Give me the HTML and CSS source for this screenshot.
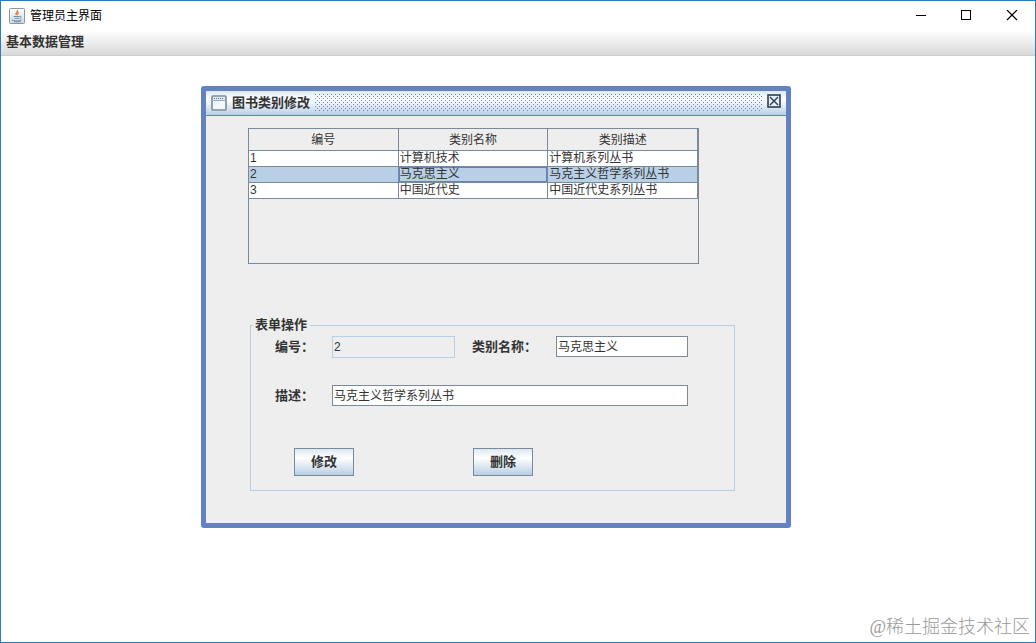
FILE: index.html
```html
<!DOCTYPE html>
<html lang="zh-CN">
<head>
<meta charset="utf-8">
<title>管理员主界面</title>
<link rel="stylesheet" href="styles.css">
</head>
<body>
<div class="window">
  <header class="titlebar">
    <svg class="app-icon" width="16" height="16" viewBox="0 0 16 16" aria-hidden="true">
      <defs><linearGradient id="tile" x2="0" y2="1"><stop stop-color="#fff"/><stop offset="1" stop-color="#cbd8e2"/></linearGradient></defs>
      <rect x=".5" y=".5" width="15" height="15" rx="1" fill="url(#tile)" stroke="#8797a3"/>
      <path d="M8.500 2c1 1.500-3 2.700-1 5.200M10 4.200c-1.800 1-1.800 1.600-1 2.800" fill="none" stroke="#e8762c" stroke-width="1.200"/>
      <path d="M4.500 8.500h6M5.500 10.300h4.500M10.500 8.500c2.500-.8 2 1.500 0 2M3.500 11.500c-1.500 1.500 7 2 9 .2M5 13.600c2 .5 5 .3 7-.4" fill="none" stroke="#537895" stroke-width=".8"/>
    </svg>
    <h1 class="title">管理员主界面</h1>
    <div class="controls">
      <button class="control" type="button" aria-label="最小化"><svg width="12" height="12" viewBox="0 0 12 12"><path d="M2 5.500h10" stroke="#000"/></svg></button>
      <button class="control" type="button" aria-label="最大化"><svg width="12" height="12" viewBox="0 0 12 12"><rect x="1.500" y=".5" width="9" height="9" fill="none" stroke="#000"/></svg></button>
      <button class="control" type="button" aria-label="关闭"><svg width="12" height="12" viewBox="0 0 12 12"><path d="M1 0l10 10M11 0L1 10" stroke="#000" stroke-width="1.200"/></svg></button>
    </div>
  </header>
  <nav class="menubar"><button class="menu" type="button">基本数据管理</button></nav>
  <main class="desktop">
    <section class="frame" aria-labelledby="frame-title">
      <header class="frame-bar">
        <svg width="16" height="16" viewBox="0 0 16 16" aria-hidden="true">
          <rect x="1" y="1" width="14" height="14" rx="1" fill="#f4f7fa" stroke="#7a8a99" stroke-width="1.600"/>
          <path d="M2 2h12v3H2z" fill="#dce9f5"/><path d="M3 3.500h10" stroke="#5f7385" stroke-dasharray="1 1"/><path d="M2 5.500h12" stroke="#9badbd"/>
        </svg>
        <h2 class="frame-title" id="frame-title">图书类别修改</h2>
        <div class="bumps"></div>
        <button class="frame-close" type="button" aria-label="关闭窗口"><svg width="14" height="14" viewBox="0 0 14 14"><rect x="1" y="1" width="12" height="12" fill="#e8f0f8" stroke="#2c3c52" stroke-width="1.600"/><path d="M3 3l8 8M11 3l-8 8" stroke="#2c3c52" stroke-width="1.400"/></svg></button>
      </header>
      <div class="frame-body">
        <div class="scroll">
          <table class="grid">
            <thead><tr><th>编号</th><th>类别名称</th><th>类别描述</th></tr></thead>
            <tbody>
              <tr><td>1</td><td>计算机技术</td><td>计算机系列丛书</td></tr>
              <tr class="selected"><td>2</td><td class="focused">马克思主义</td><td>马克主义哲学系列丛书</td></tr>
              <tr><td>3</td><td>中国近代史</td><td>中国近代史系列丛书</td></tr>
            </tbody>
          </table>
        </div>
        <fieldset class="form">
          <legend class="legend">表单操作</legend>
          <div class="fields">
            <label for="id">编号：</label>
            <input class="field" id="id" value="2" disabled>
            <label class="name-label" for="name">类别名称：</label>
            <input class="field" id="name" value="马克思主义">
            <label for="desc">描述：</label>
            <input class="field wide" id="desc" value="马克主义哲学系列丛书">
          </div>
          <div class="actions">
            <button class="action" type="button">修改</button>
            <button class="action" type="button">删除</button>
          </div>
        </fieldset>
      </div>
    </section>
    <div class="watermark">@稀土掘金技术社区</div>
  </main>
</div>
</body>
</html>
```
FILE: styles.css
```css
* { box-sizing: border-box; }
body {
  margin: 0;
  color: #333;
  font: 12px/16px "Liberation Sans", "Noto Sans CJK SC", sans-serif;
}
button, input { margin: 0; padding: 0; color: inherit; font: inherit; }
svg { display: block; }
.window {
  display: flex;
  flex-direction: column;
  min-height: 100vh;
  border: 1px solid #2b7cba;
  background: #fff;
}
.titlebar {
  display: flex;
  align-items: center;
  height: 29px;
  padding-left: 8px;
  gap: 5px;
}
.title { margin: 0; color: #000; font-size: 12px; font-weight: 400; }
.controls { display: flex; margin-left: auto; }
.control {
  display: grid;
  place-items: center;
  width: 46px;
  height: 28px;
  border: 0;
  background: none;
}
.menubar {
  height: 26px;
  padding: 4px 5px;
  border-bottom: 1px solid #ccc;
  background: linear-gradient(#fff, #dadada);
}
.menu { display: block; border: 0; background: none; font-size: 13px; font-weight: 700; }
.desktop { position: relative; flex: 1; }
.frame {
  position: absolute;
  top: 30px;
  left: 200px;
  width: 590px;
  border: 5px solid #6382bf;
  border-radius: 3px;
  background: #eee;
}
.frame-bar {
  display: flex;
  align-items: center;
  height: 25px;
  padding: 0 5px;
  gap: 5px;
  border-bottom: 1px solid #6382bf;
  background: linear-gradient(#dde8f3, #fff 35%, #b8cfe5);
}
.frame-title { margin: 0; font-size: 13px; font-weight: 700; }
.bumps {
  flex: 1;
  height: 18px;
  background:
    conic-gradient(from 270deg at 1px 1px, #6382bf 90deg, transparent 0) 0 0 / 4px 4px,
    conic-gradient(from 270deg at 1px 1px, #6382bf 90deg, transparent 0) 2px 2px / 4px 4px;
}
.frame-close { align-self: flex-start; padding-top: 3px; border: 0; background: none; }
.frame-body { padding: 12px 51px 32px 42px; }
.scroll {
  height: 136px;
  margin-right: 36px;
  border: 1px solid #7a8a99;
}
.grid { width: 100%; border-collapse: separate; border-spacing: 0; table-layout: fixed; }
.grid th, .grid td {
  padding: 0 1px;
  border-right: 1px solid #7a8a99;
  border-bottom: 1px solid #7a8a99;
  white-space: nowrap;
}
.grid th { height: 22px; padding-top: 1px; font-weight: 400; }
.grid td { height: 16px; background: #fff; line-height: 15px; text-align: left; }
.grid .selected td { background: #b8cfe5; }
.grid .focused { box-shadow: inset 0 0 0 1px #6382bf; }
.form {
  min-width: 0;
  margin: 53px 0 0 2px;
  padding: 3px 46px 14px 24px;
  border: 1px solid #b8cfe5;
  font-size: 13px;
  font-weight: 700;
}
.legend { margin-left: -22px; padding: 0 3px 0 2px; }
.fields {
  display: grid;
  grid-template-columns: 57px 123fr 101px 132fr;
  grid-auto-rows: 22px;
  row-gap: 27px;
  line-height: 22px;
}
.name-label { padding-left: 17px; }
.field {
  width: 100%;
  height: 21px;
  padding: 0 1px;
  border: 1px solid #7a8a99;
  border-radius: 0;
  background: #fff;
  font-size: 12px;
  font-weight: 400;
}
.field:disabled { height: 22px; border-color: #b8cfe5; background: #eee; }
.wide { grid-column: 2 / -1; }
.actions { display: flex; gap: 119px; margin: 41px 0 0 19px; }
.action {
  width: 60px;
  height: 28px;
  border: 1px solid #7a8a99;
  background: linear-gradient(#dde8f3, #fff 35%, #b8cfe5);
}
.watermark {
  position: absolute;
  right: 5px;
  bottom: 3px;
  color: #999;
  font: 300 18px/24px "Liberation Serif", "Noto Sans CJK SC", serif;
}
```
